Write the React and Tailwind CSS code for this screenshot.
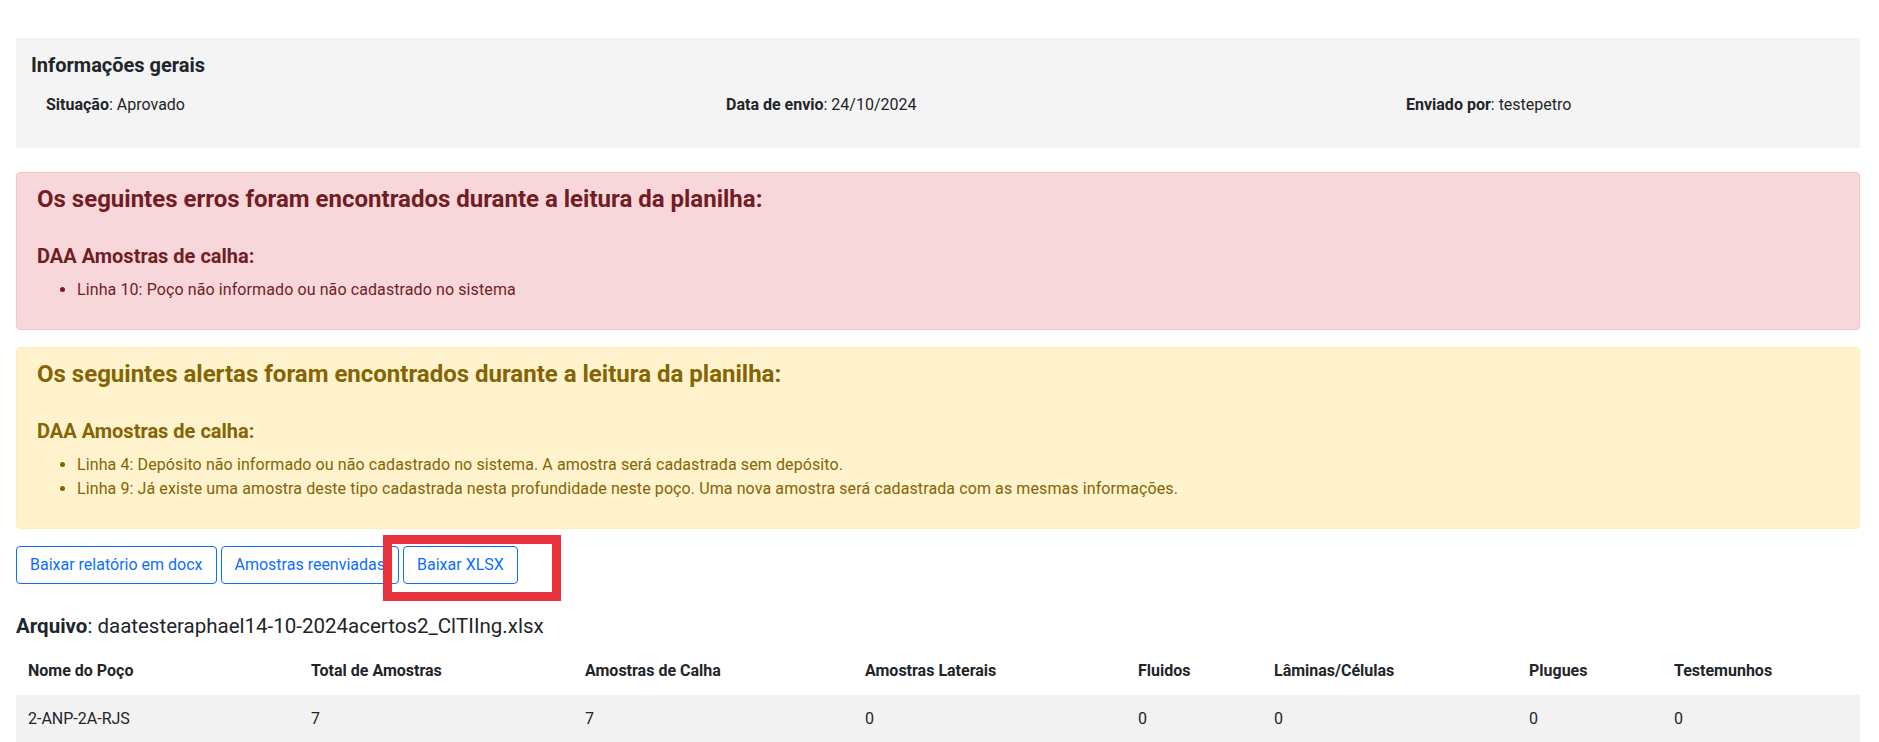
import React from "react";

const erros = ["Linha 10: Poço não informado ou não cadastrado no sistema"];

const alertas = [
  "Linha 4: Depósito não informado ou não cadastrado no sistema. A amostra será cadastrada sem depósito.",
  "Linha 9: Já existe uma amostra deste tipo cadastrada nesta profundidade neste poço. Uma nova amostra será cadastrada com as mesmas informações.",
];

const colunas = [
  { label: "Nome do Poço", w: "w-[283px]" },
  { label: "Total de Amostras", w: "w-[274px]" },
  { label: "Amostras de Calha", w: "w-[280px]" },
  { label: "Amostras Laterais", w: "w-[273px]" },
  { label: "Fluidos", w: "w-[136px]" },
  { label: "Lâminas/Células", w: "w-[255px]" },
  { label: "Plugues", w: "w-[145px]" },
  { label: "Testemunhos", w: "w-[198px]" },
];

const linhas = [["2-ANP-2A-RJS", "7", "7", "0", "0", "0", "0", "0"]];

function Alerta({ titulo, itens, box, text }) {
  return (
    <div className={`rounded-[4px] border px-5 pt-3 pb-[27px] ${box} ${text}`}>
      <h3 className="text-[24px] leading-[28.8px] font-bold">{titulo}</h3>
      <h4 className="mt-[30px] text-[20px] leading-[24px] font-bold">DAA Amostras de calha:</h4>
      <ul className="mt-[10px] list-disc pl-10 text-[16px] leading-6 tracking-[0.1px]">
        {itens.map((t) => (
          <li key={t}>{t}</li>
        ))}
      </ul>
    </div>
  );
}

export default function App() {
  return (
    <div className="min-h-[742px] bg-white pl-4 pr-[19px] pt-[38px] font-['Roboto',sans-serif] text-[#212529]">
      {/* informações gerais */}
      <div className="bg-[#f4f4f4] px-[15px] pt-[15px] pb-[31px]">
        <h2 className="text-[20px] leading-6 font-bold">Informações gerais</h2>
        <div className="mt-4 flex pl-[15px] text-[16px] leading-6">
          <div className="w-[680px]">
            <span className="font-bold">Situação</span>: Aprovado
          </div>
          <div className="w-[680px]">
            <span className="font-bold">Data de envio</span>: 24/10/2024
          </div>
          <div>
            <span className="font-bold">Enviado por</span>: testepetro
          </div>
        </div>
      </div>

      <div className="mt-6">
        <Alerta
          titulo="Os seguintes erros foram encontrados durante a leitura da planilha:"
          itens={erros}
          box="bg-[#f8d7da] border-[#f5c6cb]"
          text="text-[#721c24]"
        />
      </div>

      <div className="mt-[17px]">
        <Alerta
          titulo="Os seguintes alertas foram encontrados durante a leitura da planilha:"
          itens={alertas}
          box="bg-[#fff3cd] border-[#ffeeba]"
          text="text-[#856404]"
        />
      </div>

      {/* botões */}
      <div className="relative mt-[17px] flex gap-1">
        <button className="rounded-[4px] border border-[#0d6efd] px-[13px] py-[6px] text-[16px] leading-6 text-[#0d6efd]">
          Baixar relatório em docx
        </button>
        <button className="rounded-[4px] border border-[#0d6efd] px-[13px] py-[6px] text-[16px] leading-6 text-[#0d6efd]">
          Amostras reenviadas
        </button>
        <button className="rounded-[4px] border border-[#0d6efd] px-[13px] py-[6px] text-[16px] leading-6 text-[#0d6efd]">
          Baixar XLSX
        </button>
        <div className="pointer-events-none absolute left-[367px] top-[-11px] h-[66px] w-[178px] border-[9px] border-[#e8333d]" />
      </div>

      <p className="mt-[27px] text-[20.5px] leading-[30px]">
        <span className="font-bold">Arquivo</span>: daatesteraphael14-10-2024acertos2_ClTIIng.xlsx
      </p>

      <table className="mt-[6px] w-full table-fixed border-collapse text-[16px] leading-6">
        <thead>
          <tr>
            {colunas.map((c) => (
              <th key={c.label} className={`${c.w} px-3 py-3 text-left font-bold`}>
                {c.label}
              </th>
            ))}
          </tr>
        </thead>
        <tbody>
          {linhas.map((l) => (
            <tr key={l[0]} className="bg-[#f2f2f2]">
              {l.map((v, i) => (
                <td key={i} className="px-3 py-3">
                  {v}
                </td>
              ))}
            </tr>
          ))}
        </tbody>
      </table>
    </div>
  );
}
